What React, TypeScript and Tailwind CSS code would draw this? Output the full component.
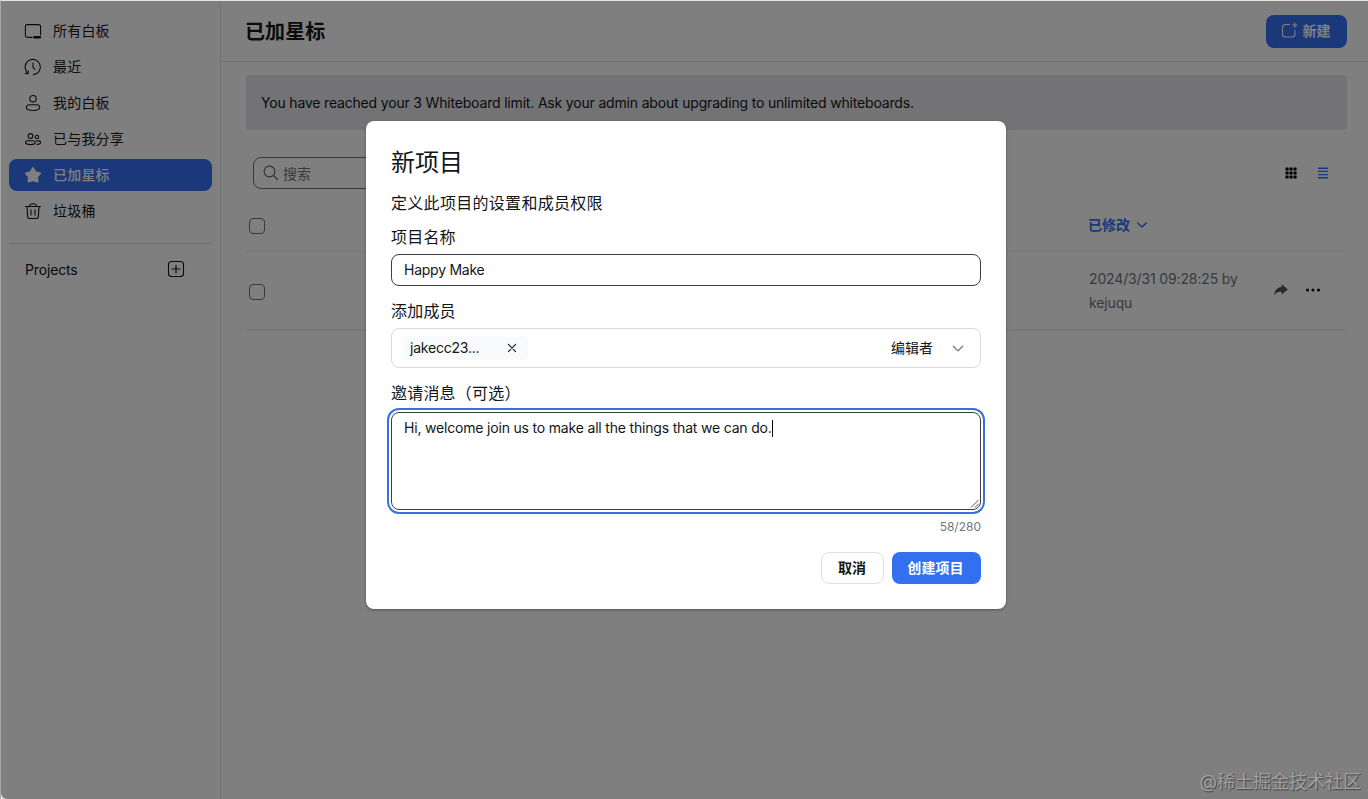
import type { ReactNode } from "react";

function Icon({ children, size = 18, className = "" }: { children: ReactNode; size?: number; className?: string }) {
  return (
    <svg
      width={size}
      height={size}
      viewBox={`0 0 ${size} ${size}`}
      fill="none"
      stroke="currentColor"
      strokeWidth="1.1"
      strokeLinecap="round"
      strokeLinejoin="round"
      className={`shrink-0 ${className}`}
    >
      {children}
    </svg>
  );
}

const navItems = [
  {
    label: "所有白板",
    icon: (
      <>
        <path d="M8 15.4H3.2A1.8 1.8 0 0 1 1.4 13.6V4.4A1.8 1.8 0 0 1 3.2 2.6H14.8A1.8 1.8 0 0 1 16.6 4.4V13" />
        <path d="M10.5 15.3H15.8" strokeWidth="2.6" />
      </>
    ),
  },
  {
    label: "最近",
    icon: (
      <>
        <path d="M3.6 14.6A7.6 7.6 0 1 1 9.4 16.6" />
        <path d="M1.3 15.4L4 15.6L4.2 12.8" />
        <path d="M9 5V9.3L11 11.5" />
      </>
    ),
  },
  {
    label: "我的白板",
    icon: (
      <>
        <circle cx="9" cy="4.7" r="3.2" />
        <path d="M5.8 10.8H12.2C14.2 10.8 15.7 12.1 15.7 13.6C15.7 15.5 13.2 16.5 9 16.5S2.3 15.5 2.3 13.6C2.3 12.1 3.8 10.8 5.8 10.8Z" />
      </>
    ),
  },
  {
    label: "已与我分享",
    icon: (
      <>
        <circle cx="6.5" cy="6" r="2.4" />
        <circle cx="13" cy="7" r="1.7" />
        <path d="M4 10.7H9C10.5 10.7 11.3 11.6 11.3 12.6C11.3 13.9 9.5 14.6 6.5 14.6S1.5 13.9 1.5 12.6C1.5 11.6 2.5 10.7 4 10.7Z" />
        <path d="M12.6 10.9H14.6C15.9 10.9 16.6 11.7 16.6 12.5C16.6 13.7 15.4 14.4 13.1 14.4" />
      </>
    ),
  },
  {
    label: "已加星标",
    active: true,
    icon: (
      <path
        fill="currentColor"
        strokeWidth="2.4"
        d="M9 2.4L11.2 6.3L15.8 7.4L12.7 10.7L13.3 15.3L9 13.8L4.7 15.3L5.3 10.7L2.2 7.4L6.8 6.3Z"
      />
    ),
  },
  {
    label: "垃圾桶",
    icon: (
      <>
        <path d="M1.5 4.5H16.5" />
        <path d="M5.5 4.4C5.5 2.7 6.8 1.7 9 1.7S12.5 2.7 12.5 4.4" />
        <path d="M3 4.6L3.6 14.6A2 2 0 0 0 5.5 16.5H12.5A2 2 0 0 0 14.4 14.6L15 4.6" />
        <path d="M7 7.7V13M11 7.7V13" />
      </>
    ),
  },
];

function Sidebar() {
  return (
    <aside className="w-[220px] shrink-0 border-r border-[#e6e6e6] pt-3.5 pr-2 pl-2">
      <nav className="flex flex-col gap-1">
        {navItems.map((item) => (
          <a
            key={item.label}
            className={`flex h-8 items-center gap-[11px] rounded-lg pl-[15px] text-sm tracking-[0.2px] ${
              item.active ? "bg-[#3672f4] font-medium text-white" : "text-[#131619]"
            }`}
          >
            <Icon>{item.icon}</Icon>
            {item.label}
          </a>
        ))}
      </nav>
      <div className="mt-4 flex h-[52px] items-center justify-between border-t border-[#dadada] pr-[27px] pl-4 text-sm text-[#131619]">
        <span className="pt-px tracking-[-0.15px]">Projects</span>
        <Icon className="mb-[2px]">
          <rect x="1.5" y="1.5" width="15" height="15" rx="3" />
          <path d="M9 5V13M5 9H13" />
        </Icon>
      </div>
    </aside>
  );
}

function Checkbox() {
  return <span className="block size-4 shrink-0 rounded border border-[#6e7680]" />;
}

function Header() {
  return (
    <header className="flex h-[61px] items-center justify-between border-b border-[#dedede] pr-[21px] pl-6">
      <h1 className="pt-0.5 text-xl font-bold tracking-[0.1px] text-[#131619]">已加星标</h1>
      <button className="flex h-[33px] w-[81px] items-center justify-center gap-[5px] rounded-lg bg-[#3672f4] pr-[3px] text-sm font-bold text-white">
        <Icon>
          <path d="M9.5 2.5H5.5A3 3 0 0 0 2.5 5.5V12A3 3 0 0 0 5.5 15H12A3 3 0 0 0 15 12V8.500" />
          <path d="M14.8 0.8V5.3M12.6 3H17" />
        </Icon>
        新建
      </button>
    </header>
  );
}

function Toolbar() {
  return (
    <div className="mt-[27px] flex items-center justify-between pr-[18px] pl-[7px]">
      <div className="flex h-8 w-[240px] items-center gap-[5px] rounded-lg border border-[#6e7680] pl-2 text-sm text-[#6e7680]">
        <Icon className="-mr-px text-[#5c5f66]">
          <circle cx="7.5" cy="7.5" r="5.4" />
          <path d="M11.5 11.5L15.5 15.5" />
        </Icon>
        <span className="-ml-px pt-px">搜索</span>
      </div>
      <div className="flex items-center gap-5">
        <svg width="12" height="12" viewBox="0 0 12 12" className="fill-black">
          {[0.5, 4.5, 8.5].map((y) =>
            [0.5, 4.5, 8.5].map((x) => <rect key={`${x}-${y}`} x={x} y={y} width="3.1" height="3.1" rx="0.6" />)
          )}
        </svg>
        <svg width="12" height="12" viewBox="0 0 12 12" className="stroke-[#3672f4]" strokeWidth="1.4">
          <path d="M1 1.2H11M1 4.4H11M1 7.6H11M1 10.8H11" />
        </svg>
      </div>
    </div>
  );
}

function BoardList() {
  return (
    <div className="mt-3 pr-0.5">
      <div className="flex h-[51px] items-center border-b border-[#ececec] pl-[3px]">
        <Checkbox />
        <div className="-mt-0.5 ml-auto flex w-[257px] items-center gap-[5px] text-sm font-bold text-[#3672f4]">
          已修改
          <Icon size={14}>
            <path d="M2.8 5L7 9L11.2 5" strokeWidth="1.6" />
          </Icon>
        </div>
      </div>
      <div className="flex h-[79px] items-center border-b-2 border-[#f1f1f1] pl-[3px]">
        <div className="pt-[3px]">
          <Checkbox />
        </div>
        <div className="mt-px ml-auto w-[184px] text-sm/6 tracking-[-0.14px] text-[#6e7680]">
          2024/3/31 09:28:25 by
          <br />
          kejuqu
        </div>
        <div className="-mt-px flex w-[72px] items-center gap-4">
          <svg width="16" height="16" viewBox="0 0 16 16" className="fill-[#555]">
            <path d="M8.6 2.3L15 7.4L8.6 12.5V9.9C5.4 9.7 3.2 10.6 1.3 13.2C1.4 8.6 4 5.3 8.6 5Z" />
          </svg>
          <svg width="16" height="16" viewBox="0 0 16 16" className="fill-black">
            <circle cx="2.5" cy="8" r="1.5" />
            <circle cx="8" cy="8" r="1.5" />
            <circle cx="13.5" cy="8" r="1.5" />
          </svg>
        </div>
      </div>
    </div>
  );
}

function NewProjectDialog() {
  return (
    <div className="absolute top-[121px] left-[366px] flex h-[488px] w-[640px] flex-col rounded-lg bg-white px-[25px] text-[#131619] shadow-[0_1px_3px_rgba(0,0,0,0.35)]">
      <h2 className="mt-[26px] text-2xl">新项目</h2>
      <p className="mt-[9px] text-base leading-[30px] tracking-[0.3px]">定义此项目的设置和成员权限</p>
      <label className="mt-[7px] text-base leading-6 tracking-[0.2px]">项目名称</label>
      <div className="mt-[5px] flex h-8 items-center rounded-lg border border-[#3c3f45] px-3 text-sm tracking-[-0.25px]">
        Happy Make
      </div>
      <label className="mt-[13px] text-base leading-6 tracking-[0.2px]">添加成员</label>
      <div className="mt-[5px] flex h-10 items-center rounded-lg border border-[#d9dade] pr-3.5 pl-3 text-sm">
        <div className="flex h-6 w-[124px] items-center justify-between rounded bg-[#f9fafb] pr-2.5 pl-1.5">
          <span className="tracking-[-0.22px]">jakecc23...</span>
          <Icon size={12}>
            <path d="M2.4 2.4L9.6 9.6M9.6 2.4L2.4 9.6" />
          </Icon>
        </div>
        <span className="ml-auto">编辑者</span>
        <Icon size={16} className="ml-[17px] text-[#6e7680]">
          <path d="M3.3 6.2L8 10.9L12.7 6.2" strokeWidth="1.3" />
        </Icon>
      </div>
      <label className="mt-[13px] text-base leading-6 tracking-[0.2px]">邀请消息（可选）</label>
      <div className="mt-[7px] flex h-[98px] flex-col justify-between rounded-lg border border-[#3c3f45] pt-[5px] text-sm outline-2 outline-offset-2 outline-[#3672db]">
        <div className="flex items-center pl-3">
          <span className="tracking-[-0.185px]">Hi, welcome join us to make all the things that we can do.</span>
          <span className="h-[17px] w-px bg-black" />
        </div>
        <svg width="10" height="10" viewBox="0 0 10 10" className="self-end stroke-[#55585e]">
          <path d="M1 8.5L8.5 1M5 8.5L8.5 5" />
        </svg>
      </div>
      <div className="mt-2 text-right text-xs leading-[18px] text-[#6e7680]">58/280</div>
      <div className="mt-4 flex justify-end gap-2 text-sm font-bold">
        <button className="h-8 w-[63px] rounded-lg border border-[#dfe0e3] pr-px">取消</button>
        <button className="h-8 w-[89px] rounded-lg bg-[#3270ef] pr-0.5 tracking-[0.1px] text-white">创建项目</button>
      </div>
    </div>
  );
}

export default function App() {
  return (
    <div className="relative h-[799px] w-[1368px] overflow-hidden bg-[#e3e6e3] font-['Inter','Noto_Sans_CJK_SC',sans-serif]">
      <div className="h-full border-t border-l border-t-[#e3e6e3] border-l-[#a8a8a8]">
        <div className="flex h-[798px] overflow-hidden rounded-bl-md bg-white">
          <Sidebar />
          <div className="flex-1">
            <Header />
            <main className="pt-[13px] pr-[21px] pl-[25px]">
              <div className="flex h-[55px] items-center rounded bg-[#e6e6ea] px-[15px] text-sm tracking-[-0.18px] text-[#131619]">
                You have reached your 3 Whiteboard limit. Ask your admin about upgrading to unlimited whiteboards.
              </div>
              <Toolbar />
              <BoardList />
            </main>
          </div>
        </div>
      </div>
      <div className="absolute top-px right-0 bottom-0 left-px rounded-bl-md bg-black/50" />
      <NewProjectDialog />
      <div className="absolute right-[7px] bottom-[3px] text-[18px] leading-7 text-[#a0a0a0] [text-shadow:1px_1px_1px_#444]">
        @稀土掘金技术社区
      </div>
    </div>
  );
}
